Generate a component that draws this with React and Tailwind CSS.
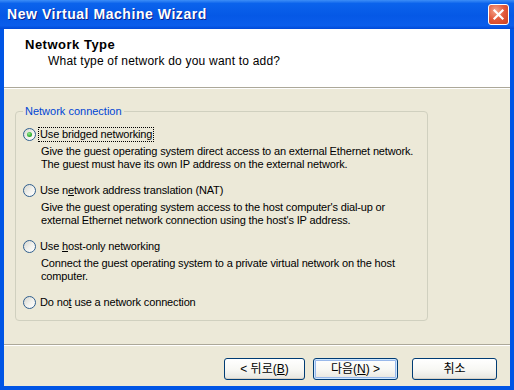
import React from 'react';

const Radio = ({ checked }) => (
  <span className="w-[13px] h-[13px] shrink-0 rounded-full border border-[#2F5E8E] bg-[linear-gradient(135deg,#D6D6CE_0%,#F2F2EE_55%,#FFFFFF_100%)] flex items-center justify-center">
    {checked && (
      <span className="w-[5px] h-[5px] rounded-full bg-[radial-gradient(circle_at_40%_35%,#9BE89B_0%,#3CB83C_50%,#1A8E1A_100%)]" />
    )}
  </span>
);

const Option = ({ label, lines, checked, focused, className = '' }) => (
  <div className={className}>
    <div className="flex items-center h-[15px]">
      <Radio checked={checked} />
      <span
        className={`ml-[2px] px-[1px] leading-[13px] border ${
          focused ? 'border-dotted border-black' : 'border-transparent'
        }`}
      >
        {label}
      </span>
    </div>
    {lines && (
      <div className="pl-[18px] mt-[3px] leading-[13px]">
        {lines.map((line) => (
          <div key={line}>{line}</div>
        ))}
      </div>
    )}
  </div>
);

const XpButton = ({ children, width, isDefault = false }) => (
  <button
    className={`h-[22px] ${width} rounded-[3px] border border-[#003C74] bg-[linear-gradient(to_bottom,#FFFFFF_0%,#F7F7F3_55%,#E6E5DE_100%)] text-[12px] leading-none text-black flex items-center justify-center ${
      isDefault ? 'shadow-[inset_0_0_0_1px_#CEE7FF,inset_0_0_0_2px_#98B8EA]' : 'shadow-[inset_0_-1px_0_#D6D0C5]'
    }`}
  >
    {children}
  </button>
);

export default function App() {
  return (
    <div className="w-[514px] h-[390px] flex flex-col bg-[#0055E5] font-['Liberation_Sans','Noto_Sans_CJK_KR',sans-serif] text-[11px] text-black">
      {/* Title bar */}
      <div className="h-[29px] shrink-0 flex items-center justify-between pl-[7px] pr-[5px] bg-[linear-gradient(to_bottom,#3D8EF7_0%,#0B63EC_12%,#0558E6_55%,#0A5DEB_88%,#0049D8_100%)]">
        <span className="text-white font-bold text-[14px] tracking-[0.55px] [text-shadow:1px_1px_0_#0A1F8C]">
          New Virtual Machine Wizard
        </span>
        <button className="w-[21px] h-[21px] rounded-[3px] border border-white bg-[radial-gradient(circle_at_35%_30%,#F5A58C_0%,#E2583A_50%,#C9401F_100%)] flex items-center justify-center">
          <svg width="13" height="13" viewBox="0 0 13 13">
            <path d="M2.5 2.5 L10.5 10.5 M10.5 2.5 L2.5 10.5" stroke="#FFFFFF" strokeWidth="2.2" strokeLinecap="square" />
          </svg>
        </button>
      </div>

      {/* Client area */}
      <div className="flex-1 mx-[4px] mb-[4px] flex flex-col bg-[#ECE9D8]">
        {/* Header */}
        <div className="h-[58px] shrink-0 bg-white pt-[8px] pl-[21px]">
          <div className="font-bold text-[13px] leading-[15px] tracking-[0.5px]">Network Type</div>
          <div className="mt-[2px] pl-[23px] text-[12px] leading-[14px] tracking-[0.2px]">
            What type of network do you want to add?
          </div>
        </div>
        <div className="h-px bg-[#ACA899]" />
        <div className="h-px bg-white" />

        {/* Body */}
        <div className="flex-1 pl-[11px] pt-[16px] tracking-[-0.15px]">
          <fieldset className="w-[413px] border border-[#D0D0BF] rounded-[4px] pl-[7px] pt-[9px] pb-[10px]">
            <legend className="px-[2px] leading-[13px] text-[#0046D5] tracking-normal">Network connection</legend>
            <Option
              checked
              focused
              label="Use bridged networking"
              lines={[
                'Give the guest operating system direct access to an external Ethernet network.',
                'The guest must have its own IP address on the external network.',
              ]}
            />
            <Option
              className="mt-[12px]"
              label={
                <>
                  Use n<span className="underline">e</span>twork address translation (NAT)
                </>
              }
              lines={[
                "Give the guest operating system access to the host computer's dial-up or",
                "external Ethernet network connection using the host's IP address.",
              ]}
            />
            <Option
              className="mt-[12px]"
              label={
                <>
                  Use <span className="underline">h</span>ost-only networking
                </>
              }
              lines={[
                'Connect the guest operating system to a private virtual network on the host',
                'computer.',
              ]}
            />
            <Option
              className="mt-[12px]"
              label={
                <>
                  Do no<span className="underline">t</span> use a network connection
                </>
              }
            />
          </fieldset>
        </div>

        {/* Footer */}
        <div className="h-px bg-[#ACA899]" />
        <div className="h-px bg-white" />
        <div className="flex pt-[12px] pb-[6px] pl-[220px]">
          <XpButton width="w-[81px]">
            &lt; 뒤로(<span className="underline">B</span>)
          </XpButton>
          <div className="ml-[8px]">
            <XpButton width="w-[85px]" isDefault>
              다음(<span className="underline">N</span>) &gt;
            </XpButton>
          </div>
          <div className="ml-[14px]">
            <XpButton width="w-[85px]">취소</XpButton>
          </div>
        </div>
      </div>
    </div>
  );
}
